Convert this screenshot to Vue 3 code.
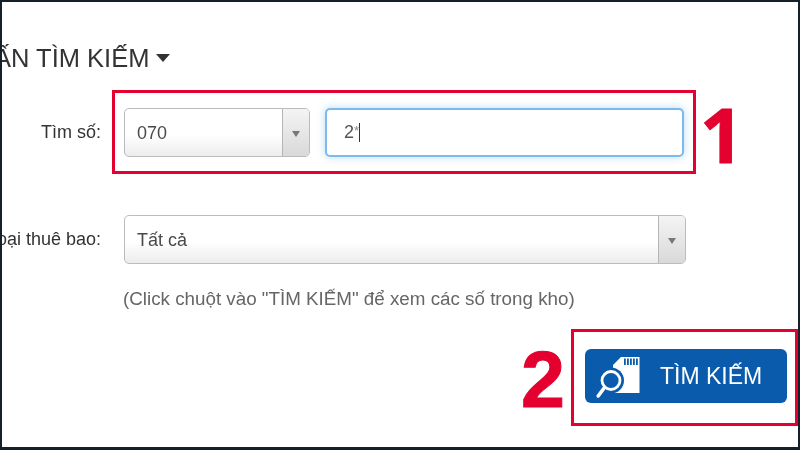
<script setup>
const stripes = [29, 32, 35, 38, 41]
</script>

<template>
  <div class="frame">
    <h2 class="heading">VẤN TÌM KIẾM <span class="caret-down"></span></h2>

    <div class="row row-one">
      <label class="label">Tìm số:</label>
      <div class="mark mark-one">
        <div class="select select-short">
          <span class="value">070</span>
          <span class="arrow-box"><i class="arrow"></i></span>
        </div>
        <div class="input"><span class="typed">2<small>*</small></span><i class="cursor"></i></div>
      </div>
      <span class="num num-one">1</span>
    </div>

    <div class="row row-two">
      <label class="label">Loại thuê bao:</label>
      <div class="select select-long">
        <span class="value">Tất cả</span>
        <span class="arrow-box"><i class="arrow"></i></span>
      </div>
    </div>

    <p class="hint">(Click chuột vào "TÌM KIẾM" để xem các số trong kho)</p>

    <div class="row row-three">
      <span class="num num-two">2</span>
      <div class="mark mark-two">
        <button class="search" type="button">
          <svg class="search-icon" viewBox="0 0 50 50" width="50" height="50" aria-hidden="true">
            <path d="M18 14 L26 6 H44.5 V42 H18 Z" fill="#fff" />
            <rect v-for="x in stripes" :key="x" :x="x" y="7.5" width="1.8" height="6.5" fill="#0a5bab" />
            <circle cx="16" cy="29.5" r="13" fill="#0a5bab" />
            <circle cx="16" cy="29.5" r="9" fill="#0a5bab" stroke="#fff" stroke-width="2.8" />
            <path d="M9.5 36.5 L3.2 45" stroke="#fff" stroke-width="3.6" stroke-linecap="round" fill="none" />
          </svg>
          <span class="search-text">TÌM KIẾM</span>
        </button>
      </div>
    </div>
  </div>
</template>

<style scoped>
.frame {
  box-sizing: border-box;
  width: 800px;
  height: 450px;
  overflow: hidden;
  background: #fff;
  border: solid #14202a;
  border-width: 2px 2px 3px 2px;
  font-family: "Liberation Sans", Arial, sans-serif;
  color: #333;
  filter: blur(0.35px);
}
.heading {
  margin: 41px 0 0 -25px;
  font-size: 25.5px;
  line-height: 30px;
  font-weight: 400;
  white-space: nowrap;
  color: #333;
  display: flex;
  align-items: center;
  gap: 7px;
}
.caret-down {
  width: 0;
  height: 0;
  border-style: solid;
  border-width: 8px 7.5px 0 7.5px;
  border-color: #333 transparent transparent transparent;
}
.row {
  display: flex;
  align-items: center;
}
.row-one {
  margin-top: 17px;
}
.label {
  flex: 0 0 99px;
  min-width: 0;
  display: flex;
  justify-content: flex-end;
  white-space: nowrap;
  font-size: 18px;
  color: #333;
}
.mark {
  box-sizing: border-box;
  border: 3px solid #e4002f;
}
.mark-one {
  width: 584px;
  height: 84px;
  margin-left: 11px;
  padding: 15px 9px;
  display: flex;
  gap: 15px;
}
.select {
  box-sizing: border-box;
  height: 49px;
  display: flex;
  justify-content: space-between;
  border: 1.5px solid #bcbcbc;
  border-radius: 5px;
  background: linear-gradient(#fff 0%, #fff 55%, #ececec 100%);
}
.select-short { width: 186px; }
.select-long { width: 562px; margin-left: 23px; }
.value {
  padding-left: 12px;
  font-size: 18px;
  line-height: 48px;
  color: #4a4a4a;
}
.arrow-box {
  box-sizing: border-box;
  width: 27px;
  display: flex;
  align-items: center;
  justify-content: center;
  border-left: 1.5px solid #b5b5b5;
  border-radius: 0 4px 4px 0;
  background: linear-gradient(#f4f4f4, #d9d9d9);
}
.arrow {
  width: 0;
  height: 0;
  margin-top: 3px;
  border-style: solid;
  border-width: 6px 4.5px 0 4.5px;
  border-color: #777 transparent transparent transparent;
}
.input {
  box-sizing: border-box;
  width: 359px;
  height: 49px;
  padding-left: 17px;
  display: flex;
  align-items: center;
  border: 2px solid #7cb9ec;
  border-radius: 5px;
  background: #fff;
  box-shadow: 0 0 8px rgba(102, 175, 233, 0.45);
  font-size: 18px;
  color: #555;
}
.typed small {
  font-size: 13px;
  vertical-align: 3px;
  color: #888;
}
.cursor {
  width: 1px;
  height: 19px;
  background: #333;
}
.num {
  font-weight: 700;
  color: #e4002f;
  line-height: 1;
  -webkit-text-stroke: 1px #e4002f;
}
.num-one {
  font-family: "Open Sans", Roboto, sans-serif;
  font-weight: 700;
  font-size: 76px;
  height: 84px;
  line-height: 88px;
  margin-left: 4px;
}
.row-two {
  margin-top: 41px;
}
.hint {
  margin: 24px 0 0 121px;
  font-size: 18.8px;
  line-height: 22px;
  color: #666;
  white-space: nowrap;
}
.row-three {
  margin-top: 19px;
  justify-content: flex-end;
}
.num-two {
  font-size: 79px;
  margin-right: 6px;
  margin-top: 4px;
}
.mark-two {
  width: 227px;
  height: 97px;
  padding: 17px 8px 0 11px;
}
.search {
  box-sizing: border-box;
  width: 202px;
  height: 54px;
  padding: 0 0 0 10px;
  display: flex;
  align-items: center;
  border: 0;
  border-radius: 6px;
  background: #0a5bab;
  font-family: inherit;
}
.search-text {
  margin-left: 15px;
  font-size: 23px;
  color: #fff;
  white-space: nowrap;
}
.search-icon {
  flex: none;
}
</style>
